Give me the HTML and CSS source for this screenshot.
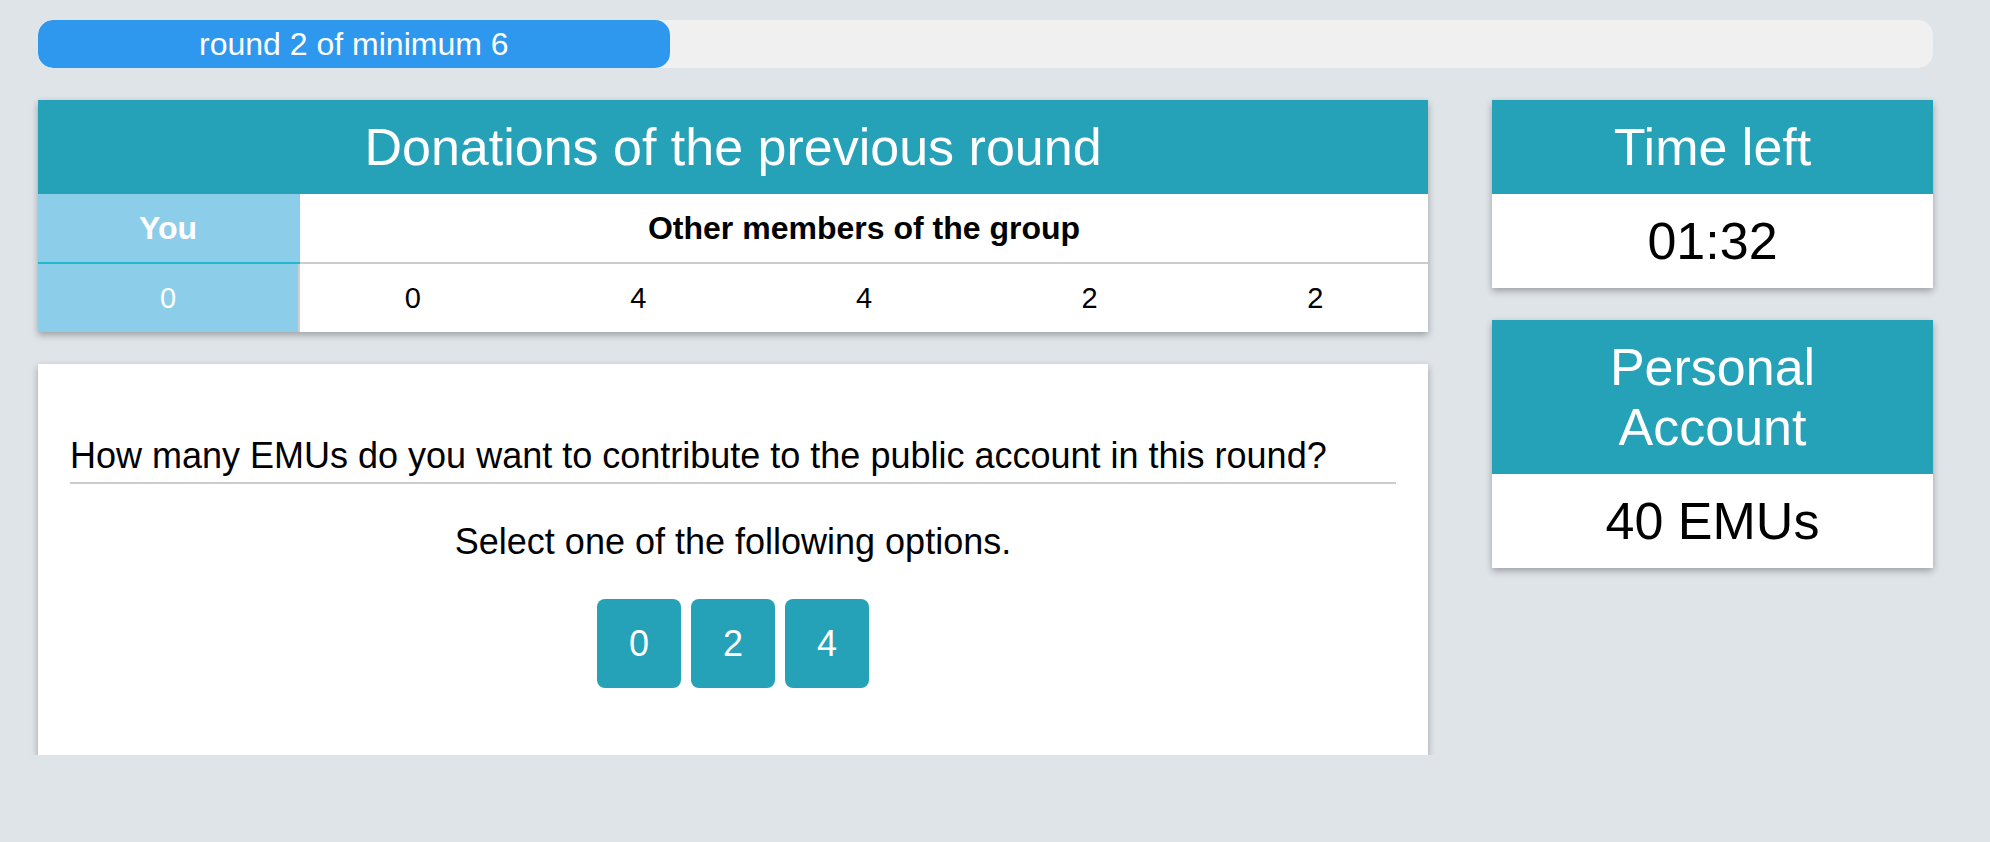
FILE: index.html
```html
<!DOCTYPE html>
<html lang="en">
<head>
<meta charset="utf-8">
<title>Round</title>
<link rel="stylesheet" href="styles.css">
</head>
<body>
<div class="page">
  <div class="progress">
    <div class="progress-fill" style="width: 33.33%;">round 2 of minimum 6</div>
  </div>

  <div class="main">
    <div class="left">
      <section class="card donations">
        <h2 class="card-title">Donations of the previous round</h2>
        <div class="don-table">
          <div class="cell you-head">You</div>
          <div class="cell others-head">Other members of the group</div>
          <div class="cell you-val">0</div>
          <div class="cell val">0</div>
          <div class="cell val">4</div>
          <div class="cell val">4</div>
          <div class="cell val">2</div>
          <div class="cell val">2</div>
        </div>
      </section>

      <section class="card question">
        <h3 class="question-text">How many EMUs do you want to contribute to the public account in this round?</h3>
        <p class="hint">Select one of the following options.</p>
        <div class="options">
          <button class="opt">0</button>
          <button class="opt">2</button>
          <button class="opt">4</button>
        </div>
      </section>
    </div>

    <div class="right">
      <section class="card side">
        <h2 class="card-title">Time left</h2>
        <div class="side-body">01:32</div>
      </section>
      <section class="card side">
        <h2 class="card-title">Personal Account</h2>
        <div class="side-body">40 EMUs</div>
      </section>
    </div>
  </div>
</div>
</body>
</html>
```

FILE: styles.css
```css
* { box-sizing: border-box; }

html, body {
  margin: 0;
  padding: 0;
  background: #dfe4e8;
  font-family: "Liberation Sans", Arial, Helvetica, sans-serif;
  color: #000;
}

.page {
  padding: 20px 57px 0 38px;
}

.progress {
  height: 48px;
  background: #f0f0f0;
  border-radius: 15px;
  overflow: hidden;
  display: flex;
}

.progress-fill {
  background: #2e98ef;
  color: #fff;
  font-size: 32px;
  line-height: 48px;
  text-align: center;
  border-radius: 15px;
  white-space: nowrap;
}

.main {
  display: flex;
  align-items: flex-start;
  gap: 64px;
  margin-top: 32px;
}

.left {
  width: 1390px;
  display: flex;
  flex-direction: column;
  gap: 32px;
}

.right {
  width: 441px;
  display: flex;
  flex-direction: column;
  gap: 32px;
}

.card {
  background: #fff;
  box-shadow: 0 3px 7px rgba(0, 0, 0, 0.3);
}

.card-title {
  margin: 0;
  background: #25a2b8;
  color: #fff;
  font-weight: normal;
  font-size: 52px;
  line-height: 60px;
  padding: 17px 30px;
  text-align: center;
}

.don-table {
  display: grid;
  grid-template-columns: 262px repeat(5, 1fr);
}

.cell {
  display: flex;
  align-items: center;
  justify-content: center;
  height: 68px;
}

.you-head {
  background: #8ccee9;
  color: #fff;
  font-weight: bold;
  font-size: 32px;
  height: 70px;
  border-bottom: 2px solid #1fb9d0;
  padding-right: 2px;
}

.others-head {
  grid-column: 2 / span 5;
  font-weight: bold;
  font-size: 32px;
  height: 70px;
  border-bottom: 2px solid #cccccc;
}

.you-val {
  background: #8ccee9;
  color: #fff;
  font-size: 29px;
  border-right: 2px solid #cfcfcf;
}

.val {
  font-size: 29px;
}

.question {
  padding: 32px;
  font-size: 36px;
}

.question-text {
  margin: 39px 0 0 0;
  font-weight: normal;
  font-size: 36px;
  line-height: 41px;
  padding-bottom: 6px;
  border-bottom: 2px solid #cccccc;
}

.hint {
  margin: 37px 0 0 0;
  text-align: center;
  font-size: 36px;
  line-height: 41px;
}

.options {
  display: flex;
  justify-content: center;
  gap: 10px;
  margin: 37px 0 35px 0;
}

.opt {
  font-family: "Liberation Sans", Arial, Helvetica, sans-serif;
  background: #25a2b8;
  color: #fff;
  border: none;
  border-radius: 8px;
  font-size: 36px;
  line-height: 51px;
  padding: 19px 32px;
  margin: 0;
}

.side-body {
  font-size: 52px;
  line-height: 60px;
  padding: 17px 20px;
  text-align: center;
}
```
